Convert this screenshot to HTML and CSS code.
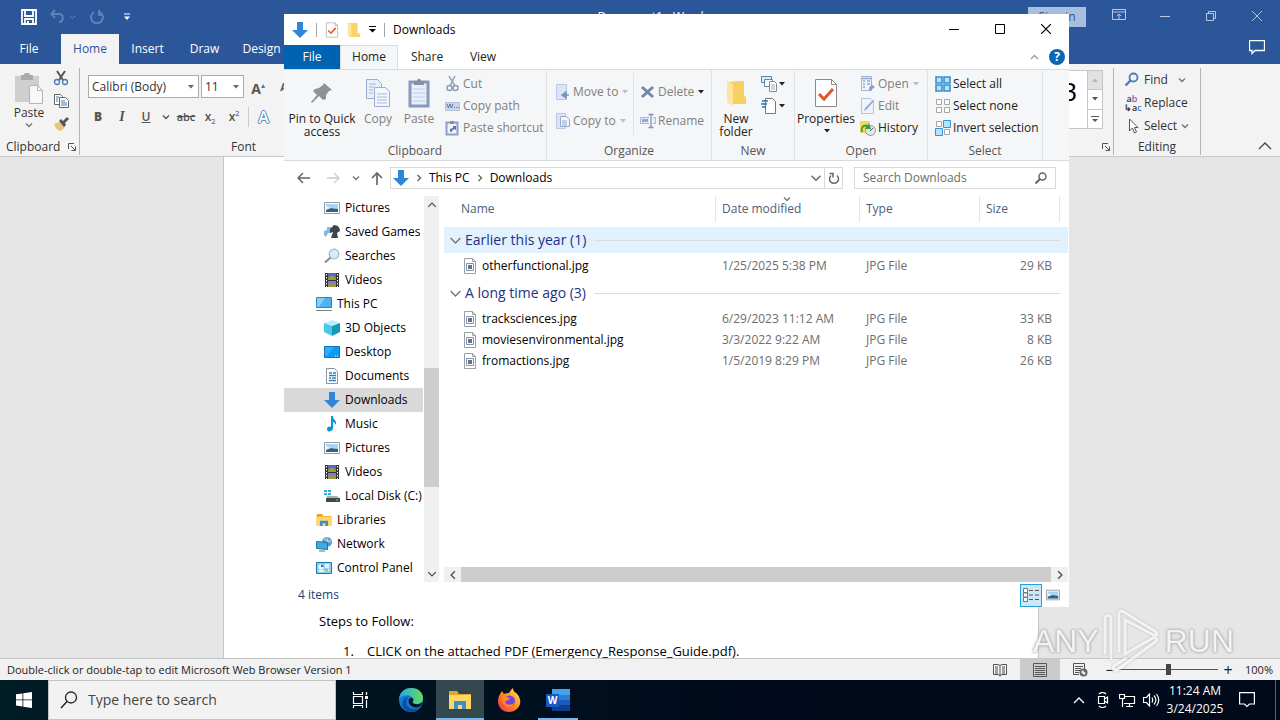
FILE: index.html
```
<!DOCTYPE html>
<html lang="en">
<head>
    <meta charset="UTF-8">
    <meta name="viewport" content="width=device-width, initial-scale=1.0">
    <title>Downloads</title>
    <link rel="stylesheet" href="styles.css">
</head>
<body>
    <!-- shared icons -->
    <svg class="sprite" aria-hidden="true">
        <symbol id="caret" viewBox="0 0 6 4"><path d="M0 0h6L3 3.5z" fill="currentColor"/></symbol>
        <symbol id="chevron" viewBox="0 0 8 8"><path d="M1 2.500l3 3 3-3" fill="none" stroke="currentColor" stroke-width="1.400" vector-effect="non-scaling-stroke"/></symbol>
        <symbol id="down-arrow" viewBox="0 0 16 16"><path d="M5 0h6v8h5l-8 8-8-8h5z" fill="#2f86d6"/></symbol>
        <symbol id="pictures" viewBox="0 0 16 16"><path d="M.5 2.500h15v11H.5z" fill="#fff" stroke="#8d9aa5"/><path d="M2 4h12v8H2z" fill="#a9d3f3"/><path d="M2 8c4-1 8 1 12 1v3H2z" fill="#35617f"/><path d="M2 6l5 2-5 2z" fill="#e8f5fd"/></symbol>
        <symbol id="videos" viewBox="0 0 16 16"><path d="M1 1h14v14H1z" fill="#333"/><path d="M4 1h8v7H4z" fill="#5568b8"/><path d="M4 9h8v6H4z" fill="#7a7fd0"/><path d="M4 6l4-3 4 3v2H4zM4 13l4-2 4 2v2H4z" fill="#9a9a38"/><path d="M2.500 2v13M13.500 2v13" stroke="#fff" stroke-dasharray="1.500 1.500"/></symbol>
        <symbol id="jpg" viewBox="0 0 14 16"><path d="M1.500.5h8l3 3v12h-11z" fill="#fff" stroke="#9aa0a6"/><path d="M9.500.5v3h3" fill="none" stroke="#9aa0a6"/><path d="M3.500 5.500h7v7h-7z" fill="#fff" stroke="#8295ad"/><path d="M5 7h4v4H5z" fill="#5c7795"/></symbol>
        <symbol id="launcher" viewBox="0 0 10 10"><path d="M1.500 7V1.500H7M4 4l4.500 4.500M8.500 4.500v4h-4" fill="none" stroke="#555"/></symbol>
        <symbol id="folder" viewBox="0 0 16 16"><path d="M1 0h11v12h3v4H3l-2-2z" fill="#fbd36a"/><path d="M1 0l4 2v14l-4-2z" fill="#ffe59b"/></symbol>
        <symbol id="check-page" viewBox="0 0 24 30"><path d="M1.500 1.500h16l5 5v22h-21z" fill="#fff" stroke="#8b8b8b"/><path d="M17.500 1.500v5h5" fill="none" stroke="#8b8b8b"/><path d="M5 16l5 5 9-10" fill="none" stroke="#e2562c" stroke-width="3"/></symbol>
        <symbol id="explorer" viewBox="0 0 24 20"><path d="M1 1h8l2 3h12v15H1z" fill="#e8a520"/><path d="M1 5h22v14H1z" fill="#ffd766"/><path d="M6 19v-8h12v8h-4v-4h-4v4z" fill="#3f8fcf"/></symbol>
    </svg>

    <main class="word">
        <header class="word-title">
            <div class="quick-access">
                <button class="icon-btn" aria-label="Save"><svg width="16" height="16" viewBox="0 0 16 16"><path d="M1 1h14v14H1zM4 1v6h8V1M4 15v-5h8v5" fill="none" stroke="#fff" stroke-width="1.800"/><path d="M6 12h2v3H6z" fill="#fff"/></svg></button>
                <button class="icon-btn faded" aria-label="Undo"><svg width="26" height="16" viewBox="0 0 26 16"><path d="M5 1L1.500 5 5 9M2 5h7c5 0 5 8 0 8" fill="none" stroke="currentColor" stroke-width="2"/><path d="M20 7l2.500 2.500L25 7" fill="none" stroke="currentColor"/></svg></button>
                <button class="icon-btn faded" aria-label="Redo"><svg width="16" height="16" viewBox="0 0 16 16"><path d="M5 3a6 6 0 1 0 6 0M10 1v5h4" fill="none" stroke="currentColor" stroke-width="2"/></svg></button>
                <button class="icon-btn" aria-label="Customize toolbar"><svg width="8" height="8" viewBox="0 0 8 8"><path d="M1 1h6" stroke="#fff"/><path d="M1 3.500h6L4 7z" fill="#fff"/></svg></button>
            </div>
            <span class="word-name">Document1 - Word</span>
            <div class="word-controls">
                <button class="sign-in">Sign in</button>
                <button class="win-btn" aria-label="Ribbon display options"><svg width="14" height="12" viewBox="0 0 14 12"><path d="M.5.5h13v10H.5zM.5 3h13M7 10V5M5 7l2-2 2 2" fill="none" stroke="currentColor"/></svg></button>
                <button class="win-btn" aria-label="Minimize"><svg width="10" height="10" viewBox="0 0 10 10"><path d="M0 5.500h10" stroke="currentColor"/></svg></button>
                <button class="win-btn" aria-label="Restore"><svg width="10" height="10" viewBox="0 0 10 10"><path d="M.5 2.500h7v7h-7zM2.500 2.500v-2h7v7h-2" fill="none" stroke="currentColor"/></svg></button>
                <button class="win-btn" aria-label="Close"><svg width="10" height="10" viewBox="0 0 10 10"><path d="M0 0l10 10M10 0L0 10" stroke="currentColor"/></svg></button>
            </div>
        </header>
        <nav class="word-tabs">
            <button class="tab-file">File</button>
            <button class="active">Home</button>
            <button>Insert</button>
            <button>Draw</button>
            <button>Design</button>
            <button class="comments" aria-label="Comments"><svg width="16" height="15" viewBox="0 0 16 15"><path d="M.5.5h15v10H6l-3 3v-3H.5z" fill="none" stroke="#fff" stroke-width="1.300"/></svg></button>
        </nav>

        <section class="word-ribbon">
            <div class="word-group w-clipboard">
                <div class="word-body">
                    <button class="word-paste">
                        <svg width="30" height="32" viewBox="0 0 30 32"><path d="M1 3h24v26H1z" fill="#d0cfd0"/><path d="M7 2h3c0-3 6-3 6 0h3v5H7z" fill="#a9a8aa"/><path d="M15.500 12.500h8l5 5v13h-13z" fill="#f8f8f8" stroke="#b5b5b5"/><path d="M23.500 12.500v5h5" fill="none" stroke="#b5b5b5"/></svg>
                        <span>Paste</span>
                        <svg class="mini" width="8" height="8"><use href="#chevron"/></svg>
                    </button>
                    <div class="word-small">
                        <button class="icon-btn" aria-label="Cut"><svg width="16" height="16" viewBox="0 0 16 16"><path d="M4 1l6 9M12 1L6 10" stroke="#555" stroke-width="2"/><circle cx="4" cy="12" r="2.500" fill="none" stroke="#4a76b5" stroke-width="1.300"/><circle cx="12" cy="12" r="2.500" fill="none" stroke="#4a76b5" stroke-width="1.300"/></svg></button>
                        <button class="icon-btn" aria-label="Copy"><svg width="16" height="16" viewBox="0 0 16 16"><path d="M1.500 1.500h6l2 2v8h-8z" fill="#fff" stroke="#666"/><path d="M6.500 4.500h6l3 3v7h-9z" fill="#fff" stroke="#666"/><path d="M8 8h4M8 10h6M8 12h6M3 4h3M3 6h2M3 8h2" stroke="#4a76b5"/></svg></button>
                        <button class="icon-btn" aria-label="Format Painter"><svg width="16" height="16" viewBox="0 0 16 16"><path d="M1 8l5-2 6 5-4 4c-3 0-5-2-7-7z" fill="#e9c27c"/><path d="M6 5l2-2 2 2 4-4 2 2-4 4 1 2-2 2z" fill="#555"/></svg></button>
                    </div>
                </div>
                <div class="word-label with-launcher">Clipboard<svg width="10" height="10"><use href="#launcher"/></svg></div>
            </div>
            <div class="word-group w-font">
                <div class="font-row">
                    <button class="combo combo-name">Calibri (Body)<svg width="6" height="4"><use href="#caret"/></svg></button>
                    <button class="combo combo-size">11<svg width="6" height="4"><use href="#caret"/></svg></button>
                    <button class="grow" aria-label="Increase font size"><b>A</b><sup>▴</sup></button>
                    <button class="shrink" aria-label="Decrease font size"><b>A</b></button>
                </div>
                <div class="font-row format">
                    <button><b>B</b></button>
                    <button><i>I</i></button>
                    <button><u>U</u></button>
                    <button class="narrow" aria-label="Underline style"><svg width="8" height="8"><use href="#chevron"/></svg></button>
                    <button><s>abc</s></button>
                    <button>x<sub>2</sub></button>
                    <button>x<sup>2</sup></button>
                    <button class="effects">A</button>
                </div>
                <div class="word-label">Font</div>
            </div>
            <div class="word-group w-styles">
                <div class="gallery">
                    <span class="gallery-sample">AaB</span>
                    <div class="gallery-scroll">
                        <button class="off" aria-label="Previous styles"><svg class="flip" width="6" height="4"><use href="#caret"/></svg></button>
                        <button aria-label="Next styles"><svg width="6" height="4"><use href="#caret"/></svg></button>
                        <button aria-label="All styles"><svg width="8" height="8" viewBox="0 0 8 8"><path d="M0 1.500h8" stroke="#555"/><path d="M1 4h6L4 7z" fill="#555"/></svg></button>
                    </div>
                </div>
                <div class="word-label end"><svg width="10" height="10"><use href="#launcher"/></svg></div>
            </div>
            <div class="word-group w-editing">
                <div class="edit-list">
                    <button><svg width="16" height="16" viewBox="0 0 16 16"><circle cx="9.500" cy="5.500" r="4" fill="none" stroke="#4a7ebb" stroke-width="1.800"/><path d="M6.500 8.500l-5 5" stroke="#4a7ebb" stroke-width="2.400"/></svg>Find<svg class="mini far" width="8" height="8"><use href="#chevron"/></svg></button>
                    <button><span class="replace-icon" aria-hidden="true"><span>a<em>b</em></span><span>↳a<i>c</i></span></span>Replace</button>
                    <button><svg width="16" height="16" viewBox="0 0 16 16"><path d="M5.500 1v12l3-3 2 5 2-1-2-4.500h3.500z" fill="#fff" stroke="#555"/></svg>Select<svg class="mini" width="8" height="8"><use href="#chevron"/></svg></button>
                </div>
                <div class="word-label">Editing</div>
            </div>
            <button class="collapse" aria-label="Collapse the ribbon"><svg width="14" height="8" viewBox="0 0 14 8"><path d="M1 7l6-6 6 6" fill="none" stroke="#444" stroke-width="1.300"/></svg></button>
        </section>

        <section class="canvas">
            <article class="page">
                <p>Steps to Follow:</p>
                <ol>
                    <li>CLICK on the attached PDF (Emergency_Response_Guide.pdf).</li>
                </ol>
            </article>
        </section>

        <footer class="word-status">
            <span>Double-click or double-tap to edit Microsoft Web Browser Version 1</span>
            <div class="view-modes">
                <button aria-label="Read Mode"><svg width="14" height="14" viewBox="0 0 14 14"><path d="M.5 1.500H5l2 1 2-1h4.500v10H9l-2 1-2-1H.5zM7 2.500v11M2 4h3M2 6h3M2 8h3M2 10h3M9 4h3M9 6h3M9 8h3M9 10h3" fill="none" stroke="#555"/></svg></button>
                <button class="on" aria-label="Print Layout"><svg width="14" height="14" viewBox="0 0 14 14"><path d="M.5.5h13v13H.5zM2 3.500h10M2 5.500h10M2 7.500h10M2 9.500h10M2 11.500h10" fill="none" stroke="#555"/></svg></button>
                <button aria-label="Web Layout"><svg width="15" height="14" viewBox="0 0 15 14"><path d="M6 11.500H.5V.5h11V6M2 3.500h8M2 5.500h6M2 7.500h5M2 9.500h4" fill="none" stroke="#555"/><circle cx="10.500" cy="9.500" r="4" fill="#666"/><path d="M8 9l2-2 1 2 2 1-2 2z" fill="#eee"/></svg></button>
            </div>
            <button class="zoom-btn" aria-label="Zoom out">−</button>
            <input class="zoom" type="range" min="0" max="200" value="100" aria-label="Zoom">
            <button class="zoom-btn" aria-label="Zoom in">+</button>
            <span class="zoom-value">100%</span>
        </footer>
    </main>

    <section class="window" aria-label="Downloads">
        <header class="titlebar">
            <svg width="16" height="16"><use href="#down-arrow"/></svg>
            <span class="bar"></span>
            <button class="icon-btn" aria-label="Properties"><svg width="14" height="16"><use href="#check-page"/></svg></button>
            <button class="icon-btn" aria-label="New folder"><svg width="14" height="16"><use href="#folder"/></svg></button>
            <button class="icon-btn" aria-label="Customize toolbar"><svg width="7" height="8" viewBox="0 0 7 8"><path d="M0 .5h7" stroke="#000"/><path d="M0 3h7L3.500 6.500z"/></svg></button>
            <span class="bar"></span>
            <h1>Downloads</h1>
            <div class="controls">
                <button aria-label="Minimize"><svg width="10" height="10" viewBox="0 0 10 10"><path d="M0 5.500h10" stroke="#000"/></svg></button>
                <button aria-label="Maximize"><svg width="10" height="10" viewBox="0 0 10 10"><path d="M.5.5h9v9h-9z" fill="none" stroke="#000"/></svg></button>
                <button aria-label="Close"><svg width="10" height="10" viewBox="0 0 10 10"><path d="M0 0l10 10M10 0L0 10" stroke="#000" stroke-width="1.200"/></svg></button>
            </div>
        </header>
        <nav class="tabs">
            <button class="file">File</button>
            <button class="active">Home</button>
            <button>Share</button>
            <button class="tab-view">View</button>
            <div class="tabs-end">
                <button class="icon-btn" aria-label="Minimize the ribbon"><svg width="9" height="6" viewBox="0 0 9 6"><path d="M1 5l3.500-3.500L8 5" fill="none" stroke="#999" stroke-width="1.300"/></svg></button>
                <button class="help" aria-label="Help">?</button>
            </div>
        </nav>

        <div class="ribbon">
            <div class="group g-clipboard">
                <div class="group-body">
                    <button class="large pin"><svg width="24" height="24" viewBox="0 0 24 24"><path d="M14 2l8 7-3 1-3 4 0 4-3 1-4-4-7 7-1-1 6-7-4-4 2-2 4-1 4-3z" fill="#8c9295"/></svg>Pin to Quick access</button>
                    <button class="large copy off"><svg width="26" height="30" viewBox="0 0 26 30"><path d="M1.500 1.500h11l4 4v15h-15z" fill="#e9effa" stroke="#9badd2"/><path d="M9.500 9.500h11l4 4v15h-15z" fill="#f2f6fd" stroke="#9badd2"/><path d="M4 6h7M4 9h5M4 12h4M4 15h4M12 16h10M12 19h10M12 22h10M12 25h10" stroke="#a9b9da"/></svg>Copy</button>
                    <button class="large paste off"><svg width="22" height="30" viewBox="0 0 22 30"><path d="M2 4h18v24H2z" fill="#e8eefa" stroke="#8799bd" stroke-width="3"/><path d="M6 3h3c0-3 4-3 4 0h3v4H6z" fill="#8490a3"/><path d="M5 11h12M5 15h12M5 19h12M5 23h12" stroke="#c0cde5"/></svg>Paste</button>
                    <div class="small-list">
                        <button class="off"><svg width="16" height="16" viewBox="0 0 16 16"><path d="M4 0l6 10M10 0L5 10" stroke="#97a5b8" stroke-width="1.500"/><circle cx="4.500" cy="12" r="2.500" fill="none" stroke="#8c9cb3" stroke-width="1.500"/><circle cx="10.500" cy="12" r="2.500" fill="none" stroke="#8c9cb3" stroke-width="1.500"/></svg>Cut</button>
                        <button class="off"><svg width="16" height="16" viewBox="0 0 16 16"><path d="M.5 4.500h14v8H.5z" fill="#cad6ee" stroke="#b3c1dd"/><path d="M2 6l1.500 4L5 6l1.500 4L8 6" fill="none" stroke="#5e76a3"/><path d="M9 9.500h1M11 9.500h1M13 9.500h1" stroke="#5e76a3"/></svg>Copy path</button>
                        <button class="off"><svg width="16" height="16" viewBox="0 0 16 16"><path d="M1.500 2.500h11v12h-11z" fill="#edf2fb" stroke="#8ca0c6" stroke-width="2"/><path d="M5 1h4v3H5z" fill="#8490a3"/><path d="M5 12V9l3-1V6l3 0v4l-2-1-3 3z" fill="#5e76a3"/></svg>Paste shortcut</button>
                    </div>
                </div>
                <div class="group-label">Clipboard</div>
            </div>
            <div class="group g-organize">
                <div class="group-body">
                    <div class="small-list spaced move">
                        <button class="off"><svg width="16" height="16" viewBox="0 0 16 16"><path d="M1.500.5h10v15h-10z" fill="#dbe5f7" stroke="#b8c7e4"/><path d="M14 11H8M11 8l-4 3 4 3z" fill="#7e93bc" stroke="#7e93bc" stroke-width="1.500"/></svg>Move to<svg class="drop" width="6" height="4"><use href="#caret"/></svg></button>
                        <button class="off"><svg width="16" height="16" viewBox="0 0 16 16"><path d="M1.500.5h9v15h-9z" fill="#dbe5f7" stroke="#b8c7e4"/><path d="M5.500 3.500h6l3 3v7h-9z" fill="#f0f5fd" stroke="#96a9cf"/><path d="M7 8h5M7 10h5M7 12h5" stroke="#96a9cf"/></svg>Copy to<svg class="drop" width="6" height="4"><use href="#caret"/></svg></button>
                    </div>
                    <div class="small-list spaced change">
                        <button class="off dark-drop"><svg width="16" height="16" viewBox="0 0 16 16"><path d="M2 3l11 10M13 3L2 13" stroke="#7488a6" stroke-width="3"/></svg>Delete<svg class="drop" width="6" height="4"><use href="#caret"/></svg></button>
                        <button class="off"><svg width="16" height="16" viewBox="0 0 16 16"><path d="M9 4.500H.5v6H9M13 4.500h2.500v6H13" fill="#e5edfa" stroke="#a5b7da"/><path d="M2 6h6v3H2z" fill="#93a9d2"/><path d="M8.500 1.500h5M8.500 14.500h5M11 1.500v13" stroke="#7e93bc" stroke-width="1.300"/></svg>Rename</button>
                    </div>
                </div>
                <div class="group-label">Organize</div>
            </div>
            <div class="group g-new">
                <div class="group-body">
                    <button class="large folder"><svg width="20" height="28" viewBox="0 0 20 28"><path d="M1 3l12-1h5v15l2 1v7H7z" fill="#f8cf63"/><path d="M1 2l6 3v22l-6-4z" fill="#ffe59b"/></svg>New folder</button>
                    <div class="small-list new-list">
                        <button aria-label="New item"><svg width="16" height="16" viewBox="0 0 16 16"><path d="M.5.5h10v6H.5z" fill="#d9edf7" stroke="#568ba5"/><path d="M3.500 3.500h8v7h-8z" fill="#fff" stroke="#568ba5"/><path d="M8.500 5.500h5l2 2v8h-7z" fill="#fff" stroke="#888"/><path d="M10 9h4M10 11h4M10 13h4" stroke="#aaa"/></svg><svg class="drop" width="6" height="4"><use href="#caret"/></svg></button>
                        <button aria-label="Easy access"><svg width="16" height="16" viewBox="0 0 16 16"><path d="M4.500.5h7l3 3v12h-10z" fill="#fff" stroke="#777"/><path d="M1 3h6M0 6h6M1 9h4" stroke="#2876b5" stroke-width="1.500"/></svg><svg class="drop" width="6" height="4"><use href="#caret"/></svg></button>
                    </div>
                </div>
                <div class="group-label">New</div>
            </div>
            <div class="group g-open">
                <div class="group-body">
                    <button class="large props"><svg width="24" height="30"><use href="#check-page"/></svg>Properties<svg class="drop" width="6" height="4"><use href="#caret"/></svg></button>
                    <div class="small-list">
                        <button class="off"><svg width="16" height="16" viewBox="0 0 16 16"><path d="M1.500.5h10v14h-10z" fill="#eef3fc" stroke="#a3b4d6"/><path d="M2 2.500h9M3 5h2M3 8h2M3 11h2M7 5h3M7 8h3" stroke="#93a6cd" stroke-width="1.500"/><path d="M9 15c0-4 1-5 2-5V8l4 3-4 3z" fill="#8a9dc5"/></svg>Open<svg class="drop" width="6" height="4"><use href="#caret"/></svg></button>
                        <button class="off"><svg width="16" height="16" viewBox="0 0 16 16"><path d="M1.500.5h9l3 3v12h-12z" fill="#eef3fc" stroke="#b6c3df"/><path d="M14 3l-8 9-2 1 1-3 8-8z" fill="#93a5cb"/></svg>Edit</button>
                        <button><svg width="16" height="16" viewBox="0 0 16 16"><path d="M0 1h10v12H0z" fill="#fbd45c"/><circle cx="10.500" cy="10.500" r="5" fill="#e3e6e8" stroke="#999"/><path d="M10 11l3-3" stroke="#555"/><path d="M1 12c-1-6 3-9 7-7l1-2 2 6-6 0 1-2c-3-1-4 2-3 5z" fill="#32a142"/></svg>History</button>
                    </div>
                </div>
                <div class="group-label">Open</div>
            </div>
            <div class="group g-select">
                <div class="group-body">
                    <div class="small-list">
                        <button><svg width="16" height="16" viewBox="0 0 16 16"><path d="M1 1h6v6H1zM9 1h6v6H9zM1 9h6v6H1zM9 9h6v6H9z" fill="#b6e0fb" stroke="#3592d4" stroke-width="1.600"/></svg>Select all</button>
                        <button><svg width="16" height="16" viewBox="0 0 16 16"><path d="M1.500 1.500h5v5h-5zM9.500 1.500h5v5h-5zM1.500 9.500h5v5h-5zM9.500 9.500h5v5h-5z" fill="#fff" stroke="#a5a5a5"/></svg>Select none</button>
                        <button><svg width="16" height="16" viewBox="0 0 16 16"><path d="M1.500 1.500h5v5h-5zM9.500 9.500h5v5h-5z" fill="#fff" stroke="#a5a5a5"/><path d="M8.500.5h7v7h-7zM.5 8.500h7v7h-7z" fill="#b6e0fb" stroke="#3592d4"/></svg>Invert selection</button>
                    </div>
                </div>
                <div class="group-label">Select</div>
            </div>
        </div>

        <div class="address-row">
            <button class="nav-btn" aria-label="Back"><svg width="13" height="12" viewBox="0 0 13 12"><path d="M13 6H1.500M6 1L1 6l5 5" fill="none" stroke="#666" stroke-width="1.500"/></svg></button>
            <button class="nav-btn" aria-label="Forward"><svg width="13" height="12" viewBox="0 0 13 12"><path d="M0 6h11.500M7 1l5 5-5 5" fill="none" stroke="#ccc" stroke-width="1.300"/></svg></button>
            <button class="nav-btn recent" aria-label="Recent locations"><svg width="8" height="8"><use href="#chevron"/></svg></button>
            <button class="nav-btn up" aria-label="Up"><svg width="12" height="13" viewBox="0 0 12 13"><path d="M6 13V1.500M1 6l5-5 5 5" fill="none" stroke="#666" stroke-width="1.700"/></svg></button>
            <div class="address">
                <svg width="16" height="16"><use href="#down-arrow"/></svg>
                <svg class="turn" width="8" height="8"><use href="#chevron"/></svg>
                <a href="#">This PC</a>
                <svg class="turn" width="8" height="8"><use href="#chevron"/></svg>
                <a href="#">Downloads</a>
                <button class="history" aria-label="Previous locations"><svg width="12" height="12"><use href="#chevron"/></svg></button>
                <button class="refresh" aria-label="Refresh"><svg width="12" height="13" viewBox="0 0 12 13"><path d="M3 3.500a4.500 4.500 0 1 0 6 0M1.500 1.500H5v4" fill="none" stroke="#666" stroke-width="1.500"/></svg></button>
            </div>
            <div class="search">
                <input type="text" placeholder="Search Downloads" aria-label="Search Downloads">
                <svg width="12" height="12" viewBox="0 0 12 12"><circle cx="7.500" cy="4.500" r="3.500" fill="none" stroke="#666" stroke-width="1.500"/><path d="M5 7l-4.500 4.500" stroke="#666" stroke-width="2"/></svg>
            </div>
        </div>

        <div class="content">
            <nav class="tree">
                <a href="#" class="sub"><svg width="16" height="16"><use href="#pictures"/></svg>Pictures</a>
                <a href="#" class="sub"><svg width="16" height="16" viewBox="0 0 16 16"><path d="M0 7l3-1 1 3-2 4-2-2zM3 3h4v6H3z" fill="#82b8de"/><path d="M6 5l4-4c4 0 6 3 6 6l-3 2 1 5H7l2-6-3 1z" fill="#3e464d"/></svg>Saved Games</a>
                <a href="#" class="sub"><svg width="16" height="16" viewBox="0 0 16 16"><circle cx="10" cy="6" r="4.800" fill="#d5edfb" stroke="#a8b8c5" stroke-width="1.300"/><path d="M6.500 9.500l-5.500 5" stroke="#8b8b8b" stroke-width="2"/></svg>Searches</a>
                <a href="#" class="sub"><svg width="16" height="16"><use href="#videos"/></svg>Videos</a>
                <a href="#"><svg width="16" height="16" viewBox="0 0 16 16"><path d="M.5 1.500h15v10H.5z" fill="#4db3ec" stroke="#2c85bb"/><path d="M1 2h8l-6 9H1z" fill="#82d0f8"/><path d="M0 14.500h16" stroke="#76838c"/></svg>This PC</a>
                <a href="#" class="sub"><svg width="16" height="16" viewBox="0 0 16 16"><path d="M0 3l8-3 8 3-8 3z" fill="#b8effb"/><path d="M0 3l8 3v10l-8-4z" fill="#48cbe2"/><path d="M16 3L8 6v10l8-4z" fill="#159bb8"/></svg>3D Objects</a>
                <a href="#" class="sub"><svg width="16" height="16" viewBox="0 0 16 16"><path d="M.5 2.500h15v11H.5z" fill="#0d9af2" stroke="#0b76be"/><path d="M1 3h9L3 12H1z" fill="#2faef9"/><path d="M11 12h1M13 12h1" stroke="#fff"/></svg>Desktop</a>
                <a href="#" class="sub"><svg width="16" height="16" viewBox="0 0 16 16"><path d="M2.500.5h8l3 3v12h-11z" fill="#fff" stroke="#8b959d"/><path d="M5 5h3M9 5h3M5 7.500h7M5 10h2M8 10h4M5 12.500h7" stroke="#2c83bd" stroke-width="1.300"/></svg>Documents</a>
                <a href="#" class="sub current"><svg width="16" height="16"><use href="#down-arrow"/></svg>Downloads</a>
                <a href="#" class="sub"><svg width="16" height="16" viewBox="0 0 16 16"><path d="M7 0h2c0 4 4 4 3 9-1-2-2-3-3-3v6c0 4-6 5-6 1 0-2 2-3 4-2z" fill="#0d94dc"/></svg>Music</a>
                <a href="#" class="sub"><svg width="16" height="16"><use href="#pictures"/></svg>Pictures</a>
                <a href="#" class="sub"><svg width="16" height="16"><use href="#videos"/></svg>Videos</a>
                <a href="#" class="sub"><svg width="16" height="16" viewBox="0 0 16 16"><path d="M0 2h3v2H0zM4 2h3v2H4zM0 5h3v2H0zM4 5h3v2H4z" fill="#27b4de"/><path d="M3 8h10l3 3H2z" fill="#a7b0b5"/><path d="M2 10h14v4H2z" fill="#41484c"/><path d="M12 12h2" stroke="#6ce17b"/></svg>Local Disk (C:)</a>
                <a href="#"><svg width="16" height="14"><use href="#explorer"/></svg>Libraries</a>
                <a href="#"><svg width="16" height="16" viewBox="0 0 16 16"><circle cx="11" cy="6" r="5" fill="#5e9ac6"/><path d="M8 3c3 1 3 3 7 2M10 1c3 3 2 7 0 9" stroke="#cce6f7" fill="none"/><path d="M.5 5.500l11 1v7l-11-1z" fill="#3daae4" stroke="#23749f"/><path d="M3 15h6" stroke="#5c7584"/></svg>Network</a>
                <a href="#"><svg width="16" height="16" viewBox="0 0 16 16"><path d="M.5 2.500h15v11H.5z" fill="#88d4f5" stroke="#2076aa"/><circle cx="5" cy="7" r="2.500" fill="#fff"/><path d="M5 7V4.500A2.500 2.500 0 0 1 7.500 7z" fill="#167ab5"/><path d="M9 5h4M9 7h4M3 11h5M10 10h3" stroke="#fff" stroke-width="1.300"/><path d="M10 10h2" stroke="#f0a832" stroke-width="2"/></svg>Control Panel</a>
            </nav>
            <div class="vscroll">
                <button aria-label="Scroll up"><svg class="flip" width="10" height="10"><use href="#chevron"/></svg></button>
                <div class="vtrack"><div class="vthumb"></div></div>
                <button aria-label="Scroll down"><svg width="10" height="10"><use href="#chevron"/></svg></button>
            </div>
            <div class="files">
                <table>
                    <colgroup>
                        <col>
                        <col class="c-date">
                        <col class="c-type">
                        <col class="c-size">
                        <col class="c-rest">
                    </colgroup>
                    <thead>
                        <tr>
                            <th><span class="c-name">Name</span></th>
                            <th><svg class="sort" width="8" height="8"><use href="#chevron"/></svg><span>Date modified</span></th>
                            <th><span>Type</span></th>
                            <th><span>Size</span></th>
                            <th></th>
                        </tr>
                    </thead>
                    <tbody>
                        <tr class="section hover"><th colspan="5"><div><svg width="13" height="13"><use href="#chevron"/></svg>Earlier this year (1)</div></th></tr>
                        <tr class="first"><td><div class="name"><svg width="14" height="16"><use href="#jpg"/></svg>otherfunctional.jpg</div></td><td>1/25/2025 5:38 PM</td><td>JPG File</td><td class="size">29 KB</td><td></td></tr>
                    </tbody>
                    <tbody>
                        <tr class="section next"><th colspan="5"><div><svg width="13" height="13"><use href="#chevron"/></svg>A long time ago (3)</div></th></tr>
                        <tr class="first"><td><div class="name"><svg width="14" height="16"><use href="#jpg"/></svg>tracksciences.jpg</div></td><td>6/29/2023 11:12 AM</td><td>JPG File</td><td class="size">33 KB</td><td></td></tr>
                        <tr><td><div class="name"><svg width="14" height="16"><use href="#jpg"/></svg>moviesenvironmental.jpg</div></td><td>3/3/2022 9:22 AM</td><td>JPG File</td><td class="size">8 KB</td><td></td></tr>
                        <tr><td><div class="name"><svg width="14" height="16"><use href="#jpg"/></svg>fromactions.jpg</div></td><td>1/5/2019 8:29 PM</td><td>JPG File</td><td class="size">26 KB</td><td></td></tr>
                    </tbody>
                </table>
                <div class="hscroll">
                    <button aria-label="Scroll left"><svg class="turn-back" width="10" height="10"><use href="#chevron"/></svg></button>
                    <div class="hthumb"></div>
                    <button aria-label="Scroll right"><svg class="turn" width="10" height="10"><use href="#chevron"/></svg></button>
                </div>
            </div>
        </div>

        <footer class="statusbar">
            <span>4 items</span>
            <button class="view on" aria-label="Details view"><svg width="16" height="14" viewBox="0 0 16 14"><path d="M.5.5h4v4h-4zM.5 5h4v4h-4zM.5 9.500h4v4h-4z" fill="#fff" stroke="#777"/><path d="M6 2.500h4M12 2.500h4M6 7h4M12 7h4M6 11.500h4M12 11.500h4" stroke="#555"/></svg></button>
            <button class="view" aria-label="Large icons view"><svg width="14" height="14"><use href="#pictures"/></svg></button>
        </footer>
    </section>

    <div class="watermark">
        <span>ANY</span>
        <svg width="58" height="66" viewBox="0 0 58 66"><path d="M8 52V10c0-3-6-3-6 0v36M16 44V6c0-3 2-4 5-2l32 20c2 2 1 4-2 3L22 12v34l28-16c4-1 5 2 2 4L14 62c-4 1-6-2-2-5l12-7" fill="none" stroke="currentColor" stroke-width="3"/></svg>
        <span>RUN</span>
    </div>

    <footer class="taskbar">
        <button class="start" aria-label="Start"><svg width="16" height="16" viewBox="0 0 16 16"><path d="M0 2.300l6.500-.9v6.100H0zM7.300 1.300L16 0v7.500H7.300zM0 8.300h6.500v6.200L0 13.600zM7.300 8.300H16V16l-8.700-1.300z" fill="#fff"/></svg></button>
        <div class="task-search">
            <svg width="18" height="18" viewBox="0 0 18 18"><circle cx="11" cy="6.500" r="5.500" fill="none" stroke="#222" stroke-width="1.300"/><path d="M7 10.500L1 17" stroke="#222" stroke-width="1.400"/></svg>
            <input type="text" placeholder="Type here to search" aria-label="Type here to search">
        </div>
        <button class="task task-view" aria-label="Task View"><svg width="17" height="16" viewBox="0 0 17 16"><path d="M1.500 4.500h9v7h-9zM1.500 0v2.500h9V0M1.500 16v-2.500h9V16M14.500 0v3M14.500 8v8" fill="none" stroke="#fff" stroke-width="1.200"/><path d="M13 4h3v3h-3z" fill="#fff"/></svg></button>
        <button class="task" aria-label="Microsoft Edge"><svg width="26" height="26" viewBox="0 0 26 26"><defs><linearGradient id="edge-a" x1="0" x2="1"><stop offset="0" stop-color="#22a9e8"/><stop offset="1" stop-color="#67dc58"/></linearGradient></defs><circle cx="13" cy="13" r="12" fill="#1479cf"/><path d="M1 12C2 4 8 1 13 1c8 0 12 5 12 10 0 4-3 6-7 6-3 0-4-1-3-3 2-5-8-9-14-2z" fill="url(#edge-a)"/><path d="M10 10c-4 7 0 12 6 12 3 0 6-1 7-3-3 8-14 8-18 1-2-4 0-9 5-10z" fill="#0c4f9e"/><path d="M11 12c2-2 6-1 4 2-1 2 0 3 3 3 3 1 5-1 6-2 0 2-1 4-3 5-6 2-12-3-10-8z" fill="#001a22"/></svg></button>
        <button class="task selected" aria-label="File Explorer"><svg width="24" height="20"><use href="#explorer"/></svg></button>
        <button class="task" aria-label="Firefox"><svg width="24" height="24" viewBox="0 0 24 24"><defs><linearGradient id="fox" x1="1" y1="0" x2="0" y2="1"><stop offset="0" stop-color="#fff04a"/><stop offset=".5" stop-color="#ff8a1e"/><stop offset="1" stop-color="#f0235e"/></linearGradient></defs><path d="M3 6l2-3 2 3c2-1 4-1 5-1 1-2 2-3 4-5 0 4 3 4 5 7 6 9-1 17-9 17C3 24-2 15 3 6z" fill="url(#fox)"/><circle cx="12.500" cy="13" r="5.500" fill="#7542e5"/><path d="M5 8c4-1 5 2 8 2-1 3-4 2-5 4 2 4 6 3 9 1-2 7-13 5-12-7z" fill="#ff8a24"/></svg></button>
        <button class="task open" aria-label="Word"><svg width="24" height="22" viewBox="0 0 24 22"><path d="M6 0h18v22H6z" fill="#2b7cd3"/><path d="M6 0h18v6H6z" fill="#41a5ee"/><path d="M6 11h18v5H6z" fill="#185abd"/><path d="M6 16h18v6H6z" fill="#103f91"/><path d="M0 5h13v13H0z" fill="#185abd"/><text x="6.500" y="15" text-anchor="middle" font-size="10" font-weight="700" fill="#fff">W</text></svg></button>
        <div class="tray">
            <button aria-label="Show hidden icons"><svg width="12" height="8" viewBox="0 0 12 8"><path d="M1 7l5-5 5 5" fill="none" stroke="#fff" stroke-width="1.300"/></svg></button>
            <button aria-label="Meet Now"><svg width="12" height="16" viewBox="0 0 12 16"><path d="M1.500 4.500h6v7h-6zM7.500 7l3-2v6l-3-2M2 2c2-2 5-2 7 0M2 14c2 2 5 2 7 0" fill="none" stroke="#fff" stroke-width="1.200"/></svg></button>
            <button aria-label="Network"><svg width="17" height="15" viewBox="0 0 17 15"><path d="M5.500 3.500h10v7H5M10.500 10.500v3M7 13.500h7M3.500 6v8M.5 1.500h5v4h-5z" fill="none" stroke="#fff" stroke-width="1.200"/></svg></button>
            <button aria-label="Volume"><svg width="17" height="14" viewBox="0 0 17 14"><path d="M.5 4.500h3l3-3.500v12l-3-3.500h-3zM9 4.500c1 2 1 3 0 5M11 2.500c2.500 3 2.500 6 0 9M13.500 1c3 4 3 8 0 12" fill="none" stroke="#fff" stroke-width="1.200"/></svg></button>
            <div class="clock"><time>11:24 AM</time><time>3/24/2025</time></div>
            <button class="notify" aria-label="Notifications"><svg width="16" height="16" viewBox="0 0 16 16"><path d="M.6.6h14.800v11.400H10.500L8 14.500 5.500 12H.6z" fill="none" stroke="#fff" stroke-width="1.200"/></svg></button>
            <span class="peek"></span>
        </div>
    </footer>
</body>
</html>
```
FILE: styles.css
```
* {
    box-sizing: border-box;
}
body {
    margin: 0;
    height: 100vh;
    display: flex;
    flex-direction: column;
    position: relative;
    overflow: hidden;
    font-family: "Open Sans", "Noto Sans", sans-serif;
    font-size: 12px;
    line-height: 16px;
    color: #222;
}
button, input {
    font: inherit;
    color: inherit;
    border: 0;
    padding: 0;
    margin: 0;
    background: none;
}
a {
    color: inherit;
    text-decoration: none;
}
svg {
    flex: none;
}
.sprite {
    position: absolute;
    width: 0;
    height: 0;
}
.icon-btn {
    display: flex;
    align-items: center;
    justify-content: center;
}
.flip {
    transform: rotate(180deg);
}
.turn {
    transform: rotate(-90deg);
}
.turn-back {
    transform: rotate(90deg);
}

/* Word */
.word {
    flex: 1;
    min-height: 0;
    display: flex;
    flex-direction: column;
    background: #e6e6e6;
}
.word-title {
    height: 34px;
    display: flex;
    justify-content: space-between;
    background: #2b579a;
    color: #fff;
}
.quick-access {
    flex: 1;
    display: flex;
    align-items: center;
    gap: 13px;
    padding-left: 21px;
}
.quick-access .icon-btn:last-child {
    margin-left: 5px;
}
.faded {
    color: #5f81b8;
}
.word-name {
    padding-top: 9px;
}
.word-controls {
    flex: 1;
    display: flex;
    align-items: center;
    justify-content: flex-end;
    color: #b8c8e2;
}
.sign-in {
    width: 58px;
    height: 20px;
    margin-right: 10px;
    background: #a9bedd;
    color: #2b579a;
}
.win-btn {
    width: 46px;
}
.word-tabs {
    height: 30px;
    display: flex;
    background: #2b579a;
    color: #fff;
}
.word-tabs button {
    width: 57px;
}
.word-tabs .tab-file {
    width: 61px;
    padding-right: 3px;
}
.word-tabs .active {
    width: 58px;
    background: #f3f3f3;
    color: #2b579a;
}
.word-tabs .comments {
    width: 46px;
    margin-left: auto;
}
.word-ribbon {
    height: 93px;
    display: flex;
    padding-top: 4px;
    background: #f3f3f3;
    border-bottom: 1px solid #c8c8c8;
    color: #333;
}
.word-group {
    display: flex;
    flex-direction: column;
    margin-bottom: 1px;
    border-right: 1px solid #b5b5b5;
}
.w-clipboard {
    width: 80px;
}
.w-font {
    width: 328px;
    padding: 7px 0 0 8px;
}
.w-styles {
    flex: 1;
    padding-top: 2px;
}
.w-editing {
    width: 87px;
}
.word-body {
    display: flex;
}
.word-paste {
    width: 52px;
    padding: 5px 0 0 6px;
    display: flex;
    flex-direction: column;
    align-items: center;
}
.mini {
    color: #777;
}
.word-small {
    padding: 2px 0 0 1px;
    display: flex;
    flex-direction: column;
    gap: 7px;
}
.word-label {
    height: 16px;
    margin-top: auto;
    display: flex;
    align-items: center;
    justify-content: center;
}
.with-launcher {
    justify-content: space-between;
    padding: 0 2px 0 6px;
}
.w-font .word-label {
    padding-right: 8px;
}
.end {
    justify-content: flex-end;
    padding-right: 2px;
}
.font-row {
    display: flex;
    gap: 2px;
}
.combo {
    height: 23px;
    padding: 0 4px 0 3px;
    display: flex;
    align-items: center;
    justify-content: space-between;
    background: #fff;
    border: 1px solid #ababab;
}
.combo svg {
    color: #666;
}
.combo-name {
    width: 111px;
}
.combo-size {
    width: 43px;
}
.grow, .shrink {
    width: 24px;
    font-size: 14px;
    color: #555;
}
.grow sup {
    font-size: 8px;
    color: #4a76b5;
}
.shrink {
    font-size: 11px;
}
.format {
    padding-top: 9px;
    gap: 0;
    color: #555;
    font-weight: 600;
}
.format button {
    width: 24px;
    padding-right: 4px;
    height: 20px;
    line-height: 16px;
}
.format i {
    font-family: "Liberation Serif", serif;
    font-size: 14px;
}
.format .narrow {
    width: 16px;
}
.format sub, .format sup {
    font-size: 7px;
    line-height: 1;
    color: #4a76b5;
}
.format s {
    font-size: 11px;
}
.format .effects {
    width: 28px;
    border-left: 1px solid #ccc;
    padding-left: 6px;
    font-size: 16px;
    color: #fff;
    text-shadow: -1px 0 #4a86c8, 1px 0 #4a86c8, 0 -1px #4a86c8, 0 1px #4a86c8;
}
.gallery {
    align-self: flex-end;
    width: 150px;
    height: 59px;
    margin-right: 10px;
    display: flex;
    background: #fff;
    border: 1px solid #c6c6c6;
}
.gallery-sample {
    flex: 1;
    padding: 8px 10px 0 0;
    text-align: right;
    font-size: 26px;
    line-height: 24px;
    color: #000;
}
.gallery-scroll {
    width: 15px;
    display: flex;
    flex-direction: column;
}
.gallery-scroll button {
    flex: 1;
    display: flex;
    align-items: center;
    justify-content: center;
    border-left: 1px solid #c6c6c6;
    border-bottom: 1px solid #c6c6c6;
    color: #555;
}
.gallery-scroll button:last-child {
    border-bottom: 0;
}
.gallery-scroll .off {
    background: #e1e1e1;
    color: #b5b5b5;
}
.edit-list button {
    height: 23px;
    padding-left: 10px;
    display: flex;
    align-items: center;
    gap: 4px;
}
.edit-list .far {
    margin-left: 6px;
}
.replace-icon {
    width: 16px;
    font-size: 9px;
    font-weight: 600;
    line-height: 9px;
    white-space: nowrap;
}
.replace-icon span {
    display: block;
    height: 9px;
}
.replace-icon em {
    font-style: normal;
    color: #a04fb5;
}
.replace-icon i {
    font-style: normal;
    color: #3b78bf;
}
.collapse {
    width: 79px;
    padding: 0 8px 2px 0;
    align-self: flex-end;
    text-align: right;
}
.canvas {
    flex: 1;
    min-height: 0;
    padding: 0 241px 0 223px;
    display: flex;
}
.page {
    flex: 1;
    display: flex;
    flex-direction: column;
    justify-content: flex-end;
    overflow: hidden;
    padding: 0 95px;
    background: #fff;
    border: solid #c6c6c6;
    border-width: 0 1px;
    font-size: 13px;
    line-height: 22px;
    color: #000;
}
.page p {
    margin: 0 0 8px;
}
.page ol {
    margin: 0 0 -4px;
    padding-left: 24px;
    list-style: none;
    counter-reset: step;
}
.page li {
    display: flex;
    counter-increment: step;
    white-space: nowrap;
}
.page li::before {
    content: counter(step) ".";
    width: 24px;
}
.word-status {
    height: 22px;
    padding: 0 7px;
    display: flex;
    align-items: center;
    background: #f1f1f1;
    border-top: 1px solid #c6c6c6;
    font-size: 11px;
}
.view-modes {
    margin-left: auto;
    display: flex;
    align-self: stretch;
}
.view-modes button {
    width: 40px;
}
.view-modes .on {
    background: #cbcbcb;
}
.view-modes svg {
    display: block;
    margin: auto;
}
.zoom-btn {
    width: 16px;
    margin-left: 2px;
    font-size: 16px;
}
.zoom {
    width: 100px;
    height: 16px;
    appearance: none;
    background: linear-gradient(#555, #555) center / 100% 1px no-repeat;
}
.zoom::-webkit-slider-thumb {
    appearance: none;
    width: 5px;
    height: 11px;
    background: #444;
}
.zoom-value {
    width: 37px;
    text-align: right;
}

/* Explorer window */
.window {
    position: absolute;
    top: 14px;
    right: 211px;
    bottom: 113px;
    left: 284px;
    display: flex;
    flex-direction: column;
    background: #fff;
}
.titlebar {
    height: 31px;
    padding-left: 8px;
    display: flex;
    align-items: center;
    gap: 8px;
    color: #000;
}
.titlebar h1 {
    margin: 0;
    font-size: 12px;
    font-weight: normal;
}
.bar {
    width: 1px;
    height: 14px;
    background: #a5a5a5;
}
.controls {
    margin-left: auto;
    display: flex;
}
.controls button {
    width: 46px;
    height: 30px;
}
.tabs {
    height: 24px;
    display: flex;
}
.tabs > button {
    width: 58px;
}
.tabs .file {
    width: 56px;
    background: #0063b1;
    color: #fff;
}
.tabs .active {
    padding-bottom: 1px;
    background: #f5f6f7;
    border: 1px solid #dadbdc;
    border-bottom: 0;
}
.tabs .tab-view {
    width: 54px;
}
.tabs-end {
    margin-left: auto;
    padding-right: 4px;
    display: flex;
    align-items: center;
    gap: 10px;
}
.help {
    width: 16px;
    height: 16px;
    border-radius: 50%;
    background: #0b66b7;
    color: #fff;
    font-weight: bold;
    line-height: 16px;
}
.ribbon {
    height: 92px;
    display: flex;
    background: #f5f6f7;
    border: solid #dadbdc;
    border-width: 1px 0;
}
.group {
    display: flex;
    flex-direction: column;
    border-right: 1px solid #e2e3e4;
}
.g-clipboard {
    width: 263px;
}
.g-organize {
    width: 165px;
}
.g-new {
    width: 83px;
}
.g-open {
    width: 133px;
}
.g-select {
    width: 115px;
}
.group-body {
    flex: 1;
    display: flex;
    padding-top: 3px;
}
.group-label {
    height: 17px;
    text-align: center;
    color: #555;
}
.large {
    height: 65px;
    display: grid;
    grid-template-rows: 39px auto;
    align-content: start;
    justify-items: center;
    align-items: start;
    line-height: 13px;
}
.large > svg:first-child {
    align-self: center;
}
.large .drop {
    margin-top: 4px;
}
.pin {
    width: 76px;
}
.copy {
    width: 36px;
}
.paste {
    width: 46px;
}
.folder {
    width: 48px;
}
.props {
    width: 62px;
}
.off {
    color: #808080;
}
.off .drop {
    color: #bbb;
}
.dark-drop .drop {
    color: #222;
}
.small-list {
    padding-left: 3px;
}
.small-list button {
    height: 22px;
    display: flex;
    align-items: center;
    gap: 2px;
    white-space: nowrap;
}
.drop {
    margin-left: 2px;
}
.group .new-list {
    padding-left: 1px;
}
.new-list .drop {
    margin-left: 0;
}
.spaced {
    padding-top: 8px;
}
.spaced button {
    margin-bottom: 7px;
}
.move {
    width: 86px;
    padding-left: 8px;
}
.change {
    height: 62px;
    padding-left: 6px;
    border-left: 1px solid #e2e3e4;
}
.g-select .small-list {
    padding-left: 7px;
}
.address-row {
    padding: 6px 13px 0 4px;
    display: flex;
    align-items: center;
}
.nav-btn {
    width: 30px;
    height: 22px;
    color: #777;
}
.nav-btn svg, .history svg, .refresh svg {
    display: block;
    margin: auto;
}
.recent {
    width: 16px;
}
.up {
    width: 26px;
}
.address {
    flex: 1;
    height: 22px;
    padding-left: 2px;
    display: flex;
    align-items: center;
    gap: 6px;
    border: 1px solid #d9d9d9;
    color: #000;
}
.address svg {
    color: #666;
}
.address .history {
    width: 16px;
    margin: 0 -6px 0 auto;
}
.address .refresh {
    width: 18px;
    height: 20px;
    border-left: 1px solid #d9d9d9;
}
.search {
    width: 202px;
    height: 22px;
    margin-left: 11px;
    padding: 0 8px;
    display: flex;
    align-items: center;
    border: 1px solid #d9d9d9;
}
.search input {
    flex: 1;
    min-width: 0;
}
.search input::placeholder {
    color: #6d6d6d;
    opacity: 1;
}
.content {
    flex: 1;
    min-height: 0;
    margin-top: 7px;
    display: flex;
}
.tree {
    width: 139px;
    overflow: hidden;
    color: #000;
}
.tree a {
    height: 24px;
    padding-left: 32px;
    display: flex;
    align-items: center;
    gap: 5px;
    white-space: nowrap;
}
.tree .sub {
    padding-left: 40px;
}
.tree .current {
    background: #d9d9d9;
}
.vscroll {
    width: 15px;
    margin: 0 5px 0 1px;
    display: flex;
    flex-direction: column;
    background: #f0f0f0;
    color: #505050;
}
.vscroll button {
    height: 17px;
}
.vscroll svg, .hscroll svg {
    display: block;
    margin: auto;
}
.vtrack {
    flex: 1;
    display: grid;
    grid-template-rows: 155fr 119fr 78fr;
}
.vthumb {
    grid-row: 2;
    background: #cdcdcd;
}
.files {
    flex: 1;
    margin-right: 1px;
    display: flex;
    flex-direction: column;
    justify-content: space-between;
}
table {
    width: 100%;
    table-layout: fixed;
    border-collapse: collapse;
    color: #6d6d6d;
}
.c-date {
    width: 144px;
}
.c-type {
    width: 120px;
}
.c-size {
    width: 80px;
}
.c-rest {
    width: 8px;
}
th, td {
    padding: 0;
    font-weight: normal;
    text-align: left;
}
thead th {
    height: 31px;
    padding-bottom: 5px;
    position: relative;
    color: #4c607a;
}
thead span {
    display: block;
    padding: 5px 0 5px 6px;
    border-right: 1px solid #e5e5e5;
}
thead .c-name {
    padding-left: 17px;
}
.sort {
    position: absolute;
    top: -1px;
    left: 67px;
    color: #777;
}
.section th {
    height: 26px;
    font-size: 14px;
    color: #1e3287;
}
.section div {
    height: 26px;
    padding: 0 8px 0 5px;
    display: flex;
    align-items: center;
    gap: 3px;
}
.section div::after {
    content: "";
    flex: 1;
    height: 1px;
    margin-left: 5px;
    background: #dcdcdc;
}
.section svg {
    color: #777;
}
.hover {
    background: #e1f1fd;
}
.next th {
    padding-top: 4px;
}
tbody td {
    height: 21px;
    padding-left: 6px;
}
.first td {
    height: 23px;
    padding-top: 2px;
}
tbody td:first-child {
    padding-left: 19px;
}
tbody .size {
    padding-right: 8px;
    text-align: right;
}
.name {
    display: flex;
    align-items: center;
    gap: 5px;
    color: #000;
}
.hscroll {
    height: 15px;
    display: flex;
    background: #f0f0f0;
    color: #505050;
}
.hscroll button {
    width: 17px;
}
.hthumb {
    flex: 1;
    background: #cdcdcd;
}
.statusbar {
    height: 25px;
    padding: 1px 6px 0 14px;
    display: flex;
    align-items: center;
    color: #1e3e78;
}
.statusbar span {
    flex: 1;
}
.view {
    width: 21px;
    height: 23px;
}
.view svg {
    display: block;
    margin: auto;
}
.view.on {
    width: 22px;
    background: #cce8f6;
    border: 1px solid #26a0da;
}

/* watermark over the corner of the screen */
.watermark {
    position: absolute;
    right: 46px;
    bottom: 46px;
    display: flex;
    align-items: center;
    gap: 4px;
    opacity: .75;
    color: #f8f8f8;
    font-family: "Liberation Sans Narrow", "Liberation Sans", sans-serif;
    font-size: 32px;
    line-height: 66px;
    text-shadow: 0 0 3px #999;
    filter: drop-shadow(0 0 1px #aaa);
    pointer-events: none;
}

/* taskbar */
.taskbar {
    height: 40px;
    display: flex;
    background: linear-gradient(90deg, #001c24, #000a1c 60%, #000a1a);
    color: #fff;
}
.taskbar button {
    display: flex;
    align-items: center;
    justify-content: center;
}
.start {
    width: 48px;
}
.task-search {
    width: 288px;
    padding: 0 11px;
    display: flex;
    align-items: center;
    gap: 10px;
    background: #f2f2f2;
    border: 1px solid #c4c4c4;
    color: #333;
}
.task-search input {
    flex: 1;
    min-width: 0;
    font-size: 14px;
}
.task-search input::placeholder {
    color: #444;
    opacity: 1;
}
.task {
    width: 48px;
    margin-right: 1px;
}
.task-view {
    margin-right: 3px;
}
.taskbar .selected {
    background: #34484f;
    box-shadow: inset 0 -2px #76b9ed;
}
.taskbar .open {
    background: linear-gradient(#76b9ed, #76b9ed) bottom / 40px 2px no-repeat;
}
.tray {
    margin-left: auto;
    display: flex;
}
.tray button {
    width: 24px;
}
.clock {
    width: 64px;
    display: flex;
    flex-direction: column;
    justify-content: center;
    text-align: center;
    line-height: 18px;
}
.tray .notify {
    width: 40px;
}
.peek {
    width: 5px;
    margin-left: 8px;
    border-left: 1px solid #59616d;
}
```
